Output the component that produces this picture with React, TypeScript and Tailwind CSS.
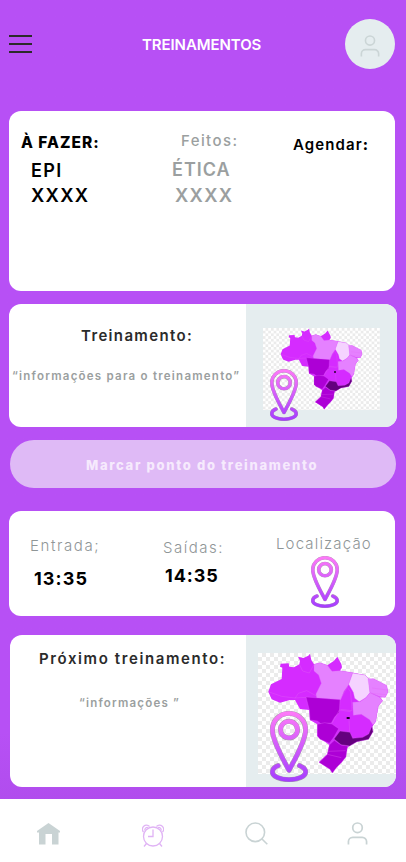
import type { ReactNode } from "react";

const CARD = "rounded-xl bg-white";

function Label({ className, children }: { className: string; children: ReactNode }) {
  return <span className={`block whitespace-nowrap leading-5 ${className}`}>{children}</span>;
}

function UserIcon({ className }: { className: string }) {
  return (
    <svg className={className} viewBox="0 0 22 24" fill="none" stroke="currentColor" strokeWidth="1.8">
      <circle cx="11" cy="6" r="5" />
      <path d="M1.500 23.500V20.500a4.500 4.500 0 0 1 4.500-4.500h10a4.500 4.500 0 0 1 4.500 4.500v3" />
    </svg>
  );
}

function PinOutline() {
  return (
    <>
      <path d="M56 178C42 150 7 91 7 56a49 49 0 0 1 98 0C105 91 70 150 56 178Z" />
      <circle cx="56" cy="56" r="25" />
      <path d="M24 164C8 170 7 178 7 183c0 13 22 23 49 23s49-10 49-23c0-7-6-14-18-19" />
    </>
  );
}

function Pin({ id, className }: { id: string; className: string }) {
  return (
    <svg className={className} viewBox="0 0 112 213" fill="none" preserveAspectRatio="none">
      <defs>
        <linearGradient id={id} x1="0" y1="0" x2="0" y2="213" gradientUnits="userSpaceOnUse">
          <stop offset="0" stopColor="#ff7bf8" />
          <stop offset="1" stopColor="#a43cff" />
        </linearGradient>
      </defs>
      <g stroke="#6b4a75" strokeOpacity="0.55" strokeWidth="15" strokeLinejoin="round" strokeLinecap="round">
        <PinOutline />
      </g>
      <g stroke={`url(#${id})`} strokeWidth="12.5" strokeLinejoin="round" strokeLinecap="round">
        <PinOutline />
      </g>
    </svg>
  );
}

function BrazilMap({ id, viewBox, className }: { id: string; viewBox: string; className: string }) {
  return (
    <svg className={className} viewBox={viewBox} preserveAspectRatio="none">
      <defs>
        <pattern id={id} x="54" y="69" width="24" height="24" patternUnits="userSpaceOnUse">
          <path fill="#fff" d="M0 0h24v24H0z" />
          <path fill="#ebebeb" d="M12 0h12v12H12zM0 12h12v12H0z" />
        </pattern>
      </defs>
      <rect x="0" y="69" width="530" height="363" fill={`url(#${id})`} />
      <path fill="#d52bff" d="M85 185l8-22 32-16 2-34-7-3 2-9 24-1 2 10 14 2 16-9 2-11-6-12 16 4 15-7 5-6 4 19 8 13 18-5 22 8 20-14 10-12 12 22 2 10-6 10 38 6 37 7 13 13 12-2 20 11 20 10 4 18-8 17-16 0 8 10-13 16-3 17-5 30-10 15 1 15-13 23-35 7-22 13-10 10 0 22-13 17-15 15-13 17-7-11-33-21 25-24 6-28-36-27 0-35-22-13-2-30-28-3-15-27-15 0-30 8-25-10z" />
      <g stroke="#dd62fa" strokeWidth="1">
        <path fill="#e581ff" d="M222 103l18-5 22 8 14 18 24-2 38 6-12 36-14 20-10 25-72-4-2-13 16-32-8-25-14-12z" />
        <path fill="#f5d3ff" d="M338 129l37 6 13 13 2 40-12 15-20 12-14-10-4-18-14-24z" />
        <path fill="#e581ff" d="M384 146l16 0 40 20 4 20-8 16-16-2-30-12zM338 217l22-2 18-12 12-15 28 13 10 11-13 16-3 17-5 30-8 10-10-16-25-16-24 3z" />
        <path fill="#ad00d6" d="M198 201l102 8-2 38-14 14-10 18-30 3-12-9-22-3-2-30z" />
        <path fill="#ad00d6" d="M232 283l22-5 22 4 20 14-14 25-14 19-28-12-8-10z" />
        <path fill="#ad00d6" d="M268 345l15-14 20 14 20 3-5 32-13 17-15 15-13 17-7-11-33-21 25-24z" />
        <path fill="#65007f" d="M282 327l18-24 30 4 8 18 30-3 18-10 10-24 3 17-13 23-35 7-22 13-26-4z" />
      </g>
      <path fill="none" stroke="#e366f3" d="M85 185l40 14 40 5 33-2M165 205l10-15 25-8 28 15M178 103l10 20 20 6 14-26M322 172l10 14 4 56-34-4M300 209l22-37M276 280l22-40 34 5M327 271l2 34M237 397l25-24 42 10M265 364l52-2M396 174l46 6M394 190l44 4" />
      <path fill="#24002b" d="M320 261h9v6h-9z" />
    </svg>
  );
}

function HomeIcon() {
  return (
    <svg className="h-[22px] w-[23px]" viewBox="0 0 23 22" fill="#c9d3d4">
      <path d="M11.500 0L23 8v1.500h-1.500V21.500H15V11H8.500v10.500H2V9.500H0V8z" />
    </svg>
  );
}

function AlarmIcon() {
  return (
    <svg className="h-[23px] w-[22px]" viewBox="0 0 22 23" fill="none" stroke="#e0b3f5" strokeWidth="1.300">
      <circle cx="11" cy="12.500" r="9.500" />
      <path d="M11 5.500v7H6M4.500 19.500L2 22.500M17.500 19.500l2.500 3M1.500 8A4 4 0 1 1 7.500 2.500M20.500 8A4 4 0 1 0 14.500 2.500M3 6.500A2.400 2.400 0 0 1 6 3.500M19 6.500a2.400 2.400 0 0 0-3-3" />
    </svg>
  );
}

function SearchIcon() {
  return (
    <svg className="h-[23px] w-[23px]" viewBox="0 0 23 23" fill="none" stroke="#c9d3d4" strokeWidth="1.600">
      <circle cx="10.300" cy="10.300" r="9.300" />
      <path d="M17 17l5.300 5.300" />
    </svg>
  );
}

export default function App() {
  return (
    <main className="flex h-[862px] w-[406px] flex-col overflow-hidden bg-[#b750f5] bg-linear-to-b from-[#b750f5] from-85% to-[#ab4ae6] font-['Inter','Liberation_Sans',sans-serif]">
      <header className="flex h-[111px] items-start pl-[9px]">
        <button className="mt-[35px] flex h-[18px] w-[23px] flex-col justify-between" aria-label="Menu">
          <i className="h-[2px] w-full bg-[#2b2b2b]" />
          <i className="h-[2px] w-full bg-[#2b2b2b]" />
          <i className="h-[2px] w-full bg-[#2b2b2b]" />
        </button>
        <h1 className="ml-[110px] mt-[35px] w-[203px] whitespace-nowrap text-[15px] font-semibold leading-5 tracking-[-0.080px] text-white">TREINAMENTOS</h1>
        <div className="mt-[19px] flex h-[50px] w-[50px] justify-center rounded-full bg-[#e5edef] text-[#cbd5d6]">
          <UserIcon className="mr-px mt-4 h-[22px] w-[20px]" />
        </div>
      </header>

      <section className={`${CARD} ml-[9px] flex h-[180px] w-[386px] shrink-0 text-black`}>
        <div className="w-[151px] pl-3 pt-[22px]">
          <Label className="text-[15.500px] font-extrabold tracking-[1px]">À FAZER:</Label>
          <Label className="mt-2 pl-[10px] text-[18px] font-semibold tracking-[1.400px]">EPI</Label>
          <Label className="mt-1 pl-[10px] text-[18.500px] font-semibold tracking-[1.300px]">XXXX</Label>
        </div>
        <div className="w-[133px] pl-3 pt-5 text-[#9b9fa0]">
          <Label className="pl-[9px] text-[15px] font-medium tracking-[1.400px]">Feitos:</Label>
          <Label className="mt-[9px] text-[18px] font-semibold tracking-[1px]">ÉTICA</Label>
          <Label className="mt-[5px] pl-[3px] text-[18.500px] font-semibold tracking-[1.300px]">XXXX</Label>
        </div>
        <div className="pt-6">
          <Label className="text-[15px] font-semibold tracking-[1.100px]">Agendar<b className="font-extrabold">:</b></Label>
        </div>
      </section>

      <section className={`${CARD} ml-[9px] mt-[13px] flex h-[123px] w-[388px] shrink-0 overflow-hidden`}>
        <div className="w-[237px] pt-[22px]">
          <Label className="pl-[72px] text-[15px] font-semibold tracking-[1.350px] text-[#2b2b2b]">Treinamento:</Label>
          <Label className="mt-5 pl-[3px] text-[11.500px] font-semibold tracking-[1.240px] text-[#9b9fa0]">“informações para o treinamento”</Label>
        </div>
        <div className="relative w-[151px] bg-[#e5edef] pl-[17px] pt-6">
          <BrazilMap id="checks-small" viewBox="7 69 516 363" className="h-[82px] w-[117px]" />
          <Pin id="pin-current" className="absolute left-6 top-[65px] h-[52px] w-[28px]" />
        </div>
      </section>

      <button className="ml-[10px] mt-[13px] flex h-12 w-[386px] shrink-0 items-center rounded-full bg-[#dfbaf6] pl-[76px] pt-[2px]">
        <Label className="text-[13px] font-extrabold tracking-[1.680px] text-[#f6eafd]">Marcar ponto do treinamento</Label>
      </button>

      <section className={`${CARD} ml-[9px] mt-[23px] flex h-[105px] w-[386px] shrink-0`}>
        <div className="w-[154px] pl-[21px] pt-[25px]">
          <Label className="text-[15px] font-light tracking-[1.600px] text-[#8f9697]">Entrada;</Label>
          <Label className="mt-[13px] pl-1 text-[18px] font-bold tracking-[1.100px] text-black">13:35</Label>
        </div>
        <div className="w-[113px] pt-[27px]">
          <Label className="text-[15px] font-light tracking-[1.500px] text-[#8f9697]">Saídas:</Label>
          <Label className="mt-2 pl-[2px] text-[18px] font-bold tracking-[0.900px] text-black">14:35</Label>
        </div>
        <div className="pt-[23px]">
          <Label className="text-[15px] font-light tracking-[1.150px] text-[#8f9697]">Localização</Label>
          <Pin id="pin-location" className="ml-[35px] mt-[2px] h-[52px] w-[28px]" />
        </div>
      </section>

      <section className={`${CARD} ml-[10px] mt-[19px] flex h-[152px] w-[386px] shrink-0 overflow-hidden`}>
        <div className="w-[236px] pt-[14px]">
          <Label className="pl-[29px] text-[15px] font-semibold tracking-[1.600px] text-[#2b2b2b]">Próximo treinamento:</Label>
          <Label className="mt-6 pl-[69px] text-[11.500px] font-semibold tracking-[1.200px] text-[#9b9fa0]">“informações ”</Label>
        </div>
        <div className="relative w-[150px] bg-[#e5edef] pl-3 pt-[18px]">
          <BrazilMap id="checks-large" viewBox="54 69 414 363" className="h-[121px] w-[138px]" />
          <Pin id="pin-next" className="absolute left-6 top-[76px] h-[71px] w-[38px]" />
        </div>
      </section>

      <nav className="mt-3 flex h-[63px] shrink-0 items-start bg-white">
        <div className="ml-[37px] mt-6"><HomeIcon /></div>
        <div className="ml-[82px] mt-[25px]"><AlarmIcon /></div>
        <div className="ml-[81px] mt-[23px]"><SearchIcon /></div>
        <UserIcon className="ml-[79px] mt-[23px] h-[23px] w-[21px] text-[#c9d3d4]" />
      </nav>
    </main>
  );
}
